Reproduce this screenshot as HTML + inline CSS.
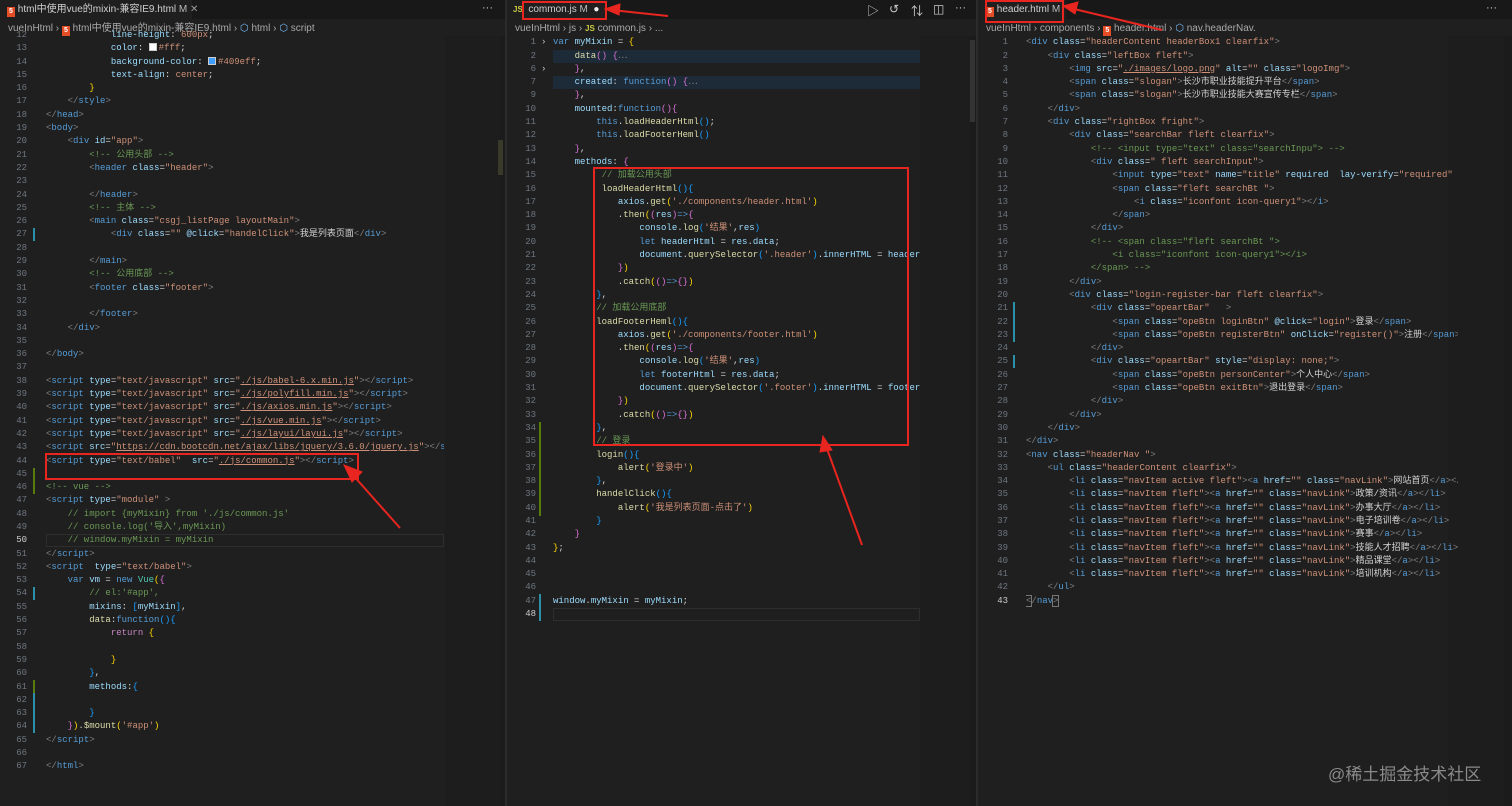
<!DOCTYPE html>
<html><head><meta charset="utf-8">
<style>
*{margin:0;padding:0;box-sizing:border-box}
body{width:1512px;height:806px;background:#1f1f1f;overflow:hidden;position:relative;font-family:"Liberation Sans","Noto Sans CJK SC",sans-serif}
.pane{position:absolute;top:0;height:806px;background:#1f1f1f;overflow:hidden}
.tabbar{position:absolute;left:0;top:0;right:0;height:19px;background:#181818}
.tab{position:absolute;top:0;height:19px;background:#1f1f1f;color:#d0d0d0;font-size:10px;line-height:19px;white-space:nowrap}
.crumb{position:absolute;top:22px;left:8px;font-size:10px;color:#a9a9a9;white-space:nowrap;line-height:14px}
pre{position:absolute;font-family:"Liberation Mono","Noto Sans CJK SC",monospace;font-size:9px;line-height:13.3px;color:#d4d4d4;white-space:pre}
.ln{text-align:right;color:#6e7681}
.t{color:#569cd6}.p{color:#808080}.a{color:#9cdcfe}.s{color:#ce9178}.c{color:#6a9955}.k{color:#569cd6}.f{color:#dcdcaa}.y{color:#ffd700}.m{color:#da70d6}.b{color:#179fff}.v{color:#9cdcfe}.r{color:#c586c0}.g{color:#4ec9b0}
.sw{display:inline-block;width:8px;height:8px;border:1px solid #ccc;vertical-align:-1px;margin-right:2px}
.mini{position:absolute;background:#252525}
.mark{position:absolute;width:2px}
.red{position:absolute;border:2px solid #e8251f}
.h5{display:inline-block;width:8px;height:10px;background:#e44d26;color:#fff;font-size:7px;line-height:10px;text-align:center;font-weight:bold;vertical-align:-1px}
.ic{position:absolute;top:2px;color:#ccc;font-size:12px}
</style></head><body>

<!-- LEFT PANE -->
<div class="pane" style="left:0;width:505px">
 <div class="tabbar"></div>
 <div class="tab" style="left:0;width:192px;padding-left:7px"><span class="h5">5</span> html中使用vue的mixin-兼容IE9.html <span style="color:#bbb">M</span> <span style="color:#999">✕</span></div>
 <div style="position:absolute;left:482px;top:2px;color:#ccc;font-size:11px">···</div>
 <div class="crumb">vueInHtml › <span class="h5">5</span> html中使用vue的mixin-兼容IE9.html › <span style="color:#75beff">⬡</span> html › <span style="color:#75beff">⬡</span> script</div>
 <div class="mini" style="left:445px;top:36px;width:55px;height:770px;background:#1d1d1d"></div>
 <div class="mini" style="left:500px;top:36px;width:5px;height:770px;background:#1b1b1b"></div>
 <div style="position:absolute;left:498px;top:140px;width:5px;height:35px;background:#3a3a2a"></div>
 <div style="position:absolute;left:46px;top:534px;width:398px;height:13px;border:1px solid #2e2e2e"></div>
 <div class="mark" style="left:33px;top:228px;height:13px;background:#2b8fa8"></div>
 <div class="mark" style="left:33px;top:468px;height:26px;background:#587c0c"></div>
 <div class="mark" style="left:33px;top:587px;height:13px;background:#2b8fa8"></div>
 <div class="mark" style="left:33px;top:680px;height:13px;background:#587c0c"></div>
 <div class="mark" style="left:33px;top:693px;height:40px;background:#2b8fa8"></div>
 <pre class="ln" style="left:0;width:27px;top:29px">12
13
14
15
16
17
18
19
20
21
22
23
24
25
26
27
28
29
30
31
32
33
34
35
36
37
38
39
40
41
42
43
44
45
46
47
48
49
<span style="color:#ccc">50</span>
51
52
53
54
55
56
57
58
59
60
61
62
63
64
65
66
67</pre>
 <pre style="left:46px;top:29px;width:398px;overflow:hidden">            <span class="a">line-height</span>: <span class="s">600px</span>;
            <span class="a">color</span>: <span class="sw" style="background:#fff"></span><span class="s">#fff</span>;
            <span class="a">background-color</span>: <span class="sw" style="background:#409eff"></span><span class="s">#409eff</span>;
            <span class="a">text-align</span>: <span class="s">center</span>;
        <span class="y">}</span>
    <span class="p">&lt;/</span><span class="t">style</span><span class="p">&gt;</span>
<span class="p">&lt;/</span><span class="t">head</span><span class="p">&gt;</span>
<span class="p">&lt;</span><span class="t">body</span><span class="p">&gt;</span>
    <span class="p">&lt;</span><span class="t">div</span> <span class="a">id</span>=<span class="s">"app"</span><span class="p">&gt;</span>
        <span class="c">&lt;!-- 公用头部 --&gt;</span>
        <span class="p">&lt;</span><span class="t">header</span> <span class="a">class</span>=<span class="s">"header"</span><span class="p">&gt;</span>

        <span class="p">&lt;/</span><span class="t">header</span><span class="p">&gt;</span>
        <span class="c">&lt;!-- 主体 --&gt;</span>
        <span class="p">&lt;</span><span class="t">main</span> <span class="a">class</span>=<span class="s">"csgj_listPage layoutMain"</span><span class="p">&gt;</span>
            <span class="p">&lt;</span><span class="t">div</span> <span class="a">class</span>=<span class="s">""</span> <span class="a">@click</span>=<span class="s">"handelClick"</span><span class="p">&gt;</span>我是列表页面<span class="p">&lt;/</span><span class="t">div</span><span class="p">&gt;</span>

        <span class="p">&lt;/</span><span class="t">main</span><span class="p">&gt;</span>
        <span class="c">&lt;!-- 公用底部 --&gt;</span>
        <span class="p">&lt;</span><span class="t">footer</span> <span class="a">class</span>=<span class="s">"footer"</span><span class="p">&gt;</span>

        <span class="p">&lt;/</span><span class="t">footer</span><span class="p">&gt;</span>
    <span class="p">&lt;/</span><span class="t">div</span><span class="p">&gt;</span>

<span class="p">&lt;/</span><span class="t">body</span><span class="p">&gt;</span>

<span class="p">&lt;</span><span class="t">script</span> <span class="a">type</span>=<span class="s">"text/javascript"</span> <span class="a">src</span>=<span class="s">"<u>./js/babel-6.x.min.js</u>"</span><span class="p">&gt;&lt;/</span><span class="t">script</span><span class="p">&gt;</span>
<span class="p">&lt;</span><span class="t">script</span> <span class="a">type</span>=<span class="s">"text/javascript"</span> <span class="a">src</span>=<span class="s">"<u>./js/polyfill.min.js</u>"</span><span class="p">&gt;&lt;/</span><span class="t">script</span><span class="p">&gt;</span>
<span class="p">&lt;</span><span class="t">script</span> <span class="a">type</span>=<span class="s">"text/javascript"</span> <span class="a">src</span>=<span class="s">"<u>./js/axios.min.js</u>"</span><span class="p">&gt;&lt;/</span><span class="t">script</span><span class="p">&gt;</span>
<span class="p">&lt;</span><span class="t">script</span> <span class="a">type</span>=<span class="s">"text/javascript"</span> <span class="a">src</span>=<span class="s">"<u>./js/vue.min.js</u>"</span><span class="p">&gt;&lt;/</span><span class="t">script</span><span class="p">&gt;</span>
<span class="p">&lt;</span><span class="t">script</span> <span class="a">type</span>=<span class="s">"text/javascript"</span> <span class="a">src</span>=<span class="s">"<u>./js/layui/layui.js</u>"</span><span class="p">&gt;&lt;/</span><span class="t">script</span><span class="p">&gt;</span>
<span class="p">&lt;</span><span class="t">script</span> <span class="a">src</span>=<span class="s">"<u>https://cdn.bootcdn.net/ajax/libs/jquery/3.6.0/jquery.js</u>"</span><span class="p">&gt;&lt;/</span><span class="t">script</span><span class="p">&gt;</span>
<span class="p">&lt;</span><span class="t">script</span> <span class="a">type</span>=<span class="s">"text/babel"</span>  <span class="a">src</span>=<span class="s">"<u>./js/common.js</u>"</span><span class="p">&gt;&lt;/</span><span class="t">script</span><span class="p">&gt;</span>

<span class="c">&lt;!-- vue --&gt;</span>
<span class="p">&lt;</span><span class="t">script</span> <span class="a">type</span>=<span class="s">"module"</span> <span class="p">&gt;</span>
    <span class="c">// import {myMixin} from './js/common.js'</span>
    <span class="c">// console.log('导入',myMixin)</span>
    <span class="c">// window.myMixin = myMixin</span>
<span class="p">&lt;/</span><span class="t">script</span><span class="p">&gt;</span>
<span class="p">&lt;</span><span class="t">script</span>  <span class="a">type</span>=<span class="s">"text/babel"</span><span class="p">&gt;</span>
    <span class="k">var</span> <span class="v">vm</span> = <span class="k">new</span> <span class="g">Vue</span><span class="y">(</span><span class="m">{</span>
        <span class="c">// el:'#app',</span>
        <span class="v">mixins</span>: <span class="b">[</span><span class="v">myMixin</span><span class="b">]</span>,
        <span class="f">data</span>:<span class="k">function</span><span class="b">(){</span>
            <span class="r">return</span> <span class="y">{</span>

            <span class="y">}</span>
        <span class="b">}</span>,
        <span class="v">methods</span>:<span class="b">{</span>

        <span class="b">}</span>
    <span class="m">}</span><span class="y">)</span>.<span class="f">$mount</span><span class="y">(</span><span class="s">'#app'</span><span class="y">)</span>
<span class="p">&lt;/</span><span class="t">script</span><span class="p">&gt;</span>

<span class="p">&lt;/</span><span class="t">html</span><span class="p">&gt;</span></pre>
</div>
<div style="position:absolute;left:505px;top:0;width:2px;height:806px;background:#2b2b2b"></div>

<!-- MIDDLE PANE -->
<div class="pane" style="left:507px;width:469px">
 <div class="tabbar"></div>
 <div class="tab" style="left:0;width:100px;padding-left:6px"><span style="color:#cbcb41;font-size:8px;font-weight:bold">JS</span> &nbsp;common.js <span style="color:#bbb">M</span> &nbsp;<span style="color:#eee">●</span></div>
 <div class="ic" style="left:360px">▷</div>
 <div class="ic" style="left:382px">↺</div>
 <div class="ic" style="left:404px">⇅</div>
 <div class="ic" style="left:426px">◫</div>
 <div class="ic" style="left:448px;font-size:11px">···</div>
 <div class="crumb">vueInHtml › js › <span style="color:#cbcb41;font-size:8px;font-weight:bold">JS</span> common.js › ...</div>
 <div class="mini" style="left:413px;top:36px;width:50px;height:770px;background:#1d1d1d"></div>
 <div style="position:absolute;left:463px;top:36px;width:6px;height:770px;background:#1b1b1b"></div>
 <div style="position:absolute;left:463px;top:40px;width:5px;height:82px;background:#333"></div>
 <div style="position:absolute;left:46px;top:49.6px;width:367px;height:13.3px;background:#1d2b38"></div>
 <div style="position:absolute;left:46px;top:76.2px;width:367px;height:13.3px;background:#1d2b38"></div>
 <div style="position:absolute;left:46px;top:608px;width:367px;height:13px;border:1px solid #2e2e2e"></div>
 <div class="mark" style="left:32px;top:422px;height:94px;background:#587c0c"></div>
 <div class="mark" style="left:32px;top:594px;height:27px;background:#2b8fa8"></div>
 <pre class="ln" style="left:0;width:29px;top:36.3px">1
2
6
7
9
10
11
12
13
14
15
16
17
18
19
20
21
22
23
24
25
26
27
28
29
30
31
32
33
34
35
36
37
38
39
40
41
42
43
44
45
46
47
<span style="color:#ccc">48</span></pre>
 <pre style="left:34px;top:36.3px;color:#c5c5c5">
›

›</pre>
 <pre style="left:46px;top:36.3px;width:367px;overflow:hidden"><span class="k">var</span> <span class="v">myMixin</span> = <span class="y">{</span>
    <span class="f">data</span><span class="m">()</span> <span class="m">{</span><span class="p">⋯</span>
    <span class="m">}</span>,
    <span class="v">created</span>: <span class="k">function</span><span class="m">()</span> <span class="m">{</span><span class="p">⋯</span>
    <span class="m">}</span>,
    <span class="v">mounted</span>:<span class="k">function</span><span class="m">(){</span>
        <span class="k">this</span>.<span class="f">loadHeaderHtml</span><span class="b">()</span>;
        <span class="k">this</span>.<span class="f">loadFooterHeml</span><span class="b">()</span>
    <span class="m">}</span>,
    <span class="v">methods</span>: <span class="m">{</span>
         <span class="c">// 加载公用头部</span>
         <span class="f">loadHeaderHtml</span><span class="b">(){</span>
            <span class="v">axios</span>.<span class="f">get</span><span class="y">(</span><span class="s">'./components/header.html'</span><span class="y">)</span>
            .<span class="f">then</span><span class="y">(</span><span class="m">(</span><span class="v">res</span><span class="m">)</span><span class="k">=&gt;</span><span class="m">{</span>
                <span class="v">console</span>.<span class="f">log</span><span class="b">(</span><span class="s">'结果'</span>,<span class="v">res</span><span class="b">)</span>
                <span class="k">let</span> <span class="v">headerHtml</span> = <span class="v">res</span>.<span class="v">data</span>;
                <span class="v">document</span>.<span class="f">querySelector</span><span class="b">(</span><span class="s">'.header'</span><span class="b">)</span>.<span class="v">innerHTML</span> = <span class="v">headerHtml</span>
            <span class="m">}</span><span class="y">)</span>
            .<span class="f">catch</span><span class="y">(</span><span class="m">()</span><span class="k">=&gt;</span><span class="m">{}</span><span class="y">)</span>
        <span class="b">}</span>,
        <span class="c">// 加载公用底部</span>
        <span class="f">loadFooterHeml</span><span class="b">(){</span>
            <span class="v">axios</span>.<span class="f">get</span><span class="y">(</span><span class="s">'./components/footer.html'</span><span class="y">)</span>
            .<span class="f">then</span><span class="y">(</span><span class="m">(</span><span class="v">res</span><span class="m">)</span><span class="k">=&gt;</span><span class="m">{</span>
                <span class="v">console</span>.<span class="f">log</span><span class="b">(</span><span class="s">'结果'</span>,<span class="v">res</span><span class="b">)</span>
                <span class="k">let</span> <span class="v">footerHtml</span> = <span class="v">res</span>.<span class="v">data</span>;
                <span class="v">document</span>.<span class="f">querySelector</span><span class="b">(</span><span class="s">'.footer'</span><span class="b">)</span>.<span class="v">innerHTML</span> = <span class="v">footerHtml</span>
            <span class="m">}</span><span class="y">)</span>
            .<span class="f">catch</span><span class="y">(</span><span class="m">()</span><span class="k">=&gt;</span><span class="m">{}</span><span class="y">)</span>
        <span class="b">}</span>,
        <span class="c">// 登录</span>
        <span class="f">login</span><span class="b">(){</span>
            <span class="f">alert</span><span class="y">(</span><span class="s">'登录中'</span><span class="y">)</span>
        <span class="b">}</span>,
        <span class="f">handelClick</span><span class="b">(){</span>
            <span class="f">alert</span><span class="y">(</span><span class="s">'我是列表页面-点击了'</span><span class="y">)</span>
        <span class="b">}</span>
    <span class="m">}</span>
<span class="y">}</span>;



<span class="v">window</span>.<span class="v">myMixin</span> = <span class="v">myMixin</span>;
</pre>
</div>
<div style="position:absolute;left:976px;top:0;width:2px;height:806px;background:#2b2b2b"></div>

<!-- RIGHT PANE -->
<div class="pane" style="left:978px;width:534px">
 <div class="tabbar"></div>
 <div class="tab" style="left:0;width:88px;padding-left:8px"><span class="h5">5</span> header.html <span style="color:#bbb">M</span></div>
 <div style="position:absolute;left:508px;top:2px;color:#ccc;font-size:11px">···</div>
 <div class="crumb">vueInHtml › components › <span class="h5">5</span> header.html › <span style="color:#75beff">⬡</span> nav.headerNav.</div>
 <div class="mini" style="left:470px;top:36px;width:56px;height:770px;background:#1d1d1d"></div>
 <div style="position:absolute;left:526px;top:36px;width:8px;height:770px;background:#1b1b1b"></div>
 <div class="mark" style="left:35px;top:302px;height:40px;background:#2b8fa8"></div>
 <div class="mark" style="left:35px;top:355px;height:13px;background:#2b8fa8"></div>
 <pre class="ln" style="left:0;width:30px;top:36.3px">1
2
3
4
5
6
7
8
9
10
11
12
13
14
15
16
17
18
19
20
21
22
23
24
25
26
27
28
29
30
31
32
33
34
35
36
37
38
39
40
41
42
<span style="color:#ccc">43</span></pre>
 <pre style="left:48px;top:36.3px;width:432px;overflow:hidden"><span class="p">&lt;</span><span class="t">div</span> <span class="a">class</span>=<span class="s">"headerContent headerBox1 clearfix"</span><span class="p">&gt;</span>
    <span class="p">&lt;</span><span class="t">div</span> <span class="a">class</span>=<span class="s">"leftBox fleft"</span><span class="p">&gt;</span>
        <span class="p">&lt;</span><span class="t">img</span> <span class="a">src</span>=<span class="s">"<u>./images/logo.png</u>"</span> <span class="a">alt</span>=<span class="s">""</span> <span class="a">class</span>=<span class="s">"logoImg"</span><span class="p">&gt;</span>
        <span class="p">&lt;</span><span class="t">span</span> <span class="a">class</span>=<span class="s">"slogan"</span><span class="p">&gt;</span>长沙市职业技能提升平台<span class="p">&lt;/</span><span class="t">span</span><span class="p">&gt;</span>
        <span class="p">&lt;</span><span class="t">span</span> <span class="a">class</span>=<span class="s">"slogan"</span><span class="p">&gt;</span>长沙市职业技能大赛宣传专栏<span class="p">&lt;/</span><span class="t">span</span><span class="p">&gt;</span>
    <span class="p">&lt;/</span><span class="t">div</span><span class="p">&gt;</span>
    <span class="p">&lt;</span><span class="t">div</span> <span class="a">class</span>=<span class="s">"rightBox fright"</span><span class="p">&gt;</span>
        <span class="p">&lt;</span><span class="t">div</span> <span class="a">class</span>=<span class="s">"searchBar fleft clearfix"</span><span class="p">&gt;</span>
            <span class="c">&lt;!-- &lt;input type="text" class="searchInpu"&gt; --&gt;</span>
            <span class="p">&lt;</span><span class="t">div</span> <span class="a">class</span>=<span class="s">" fleft searchInput"</span><span class="p">&gt;</span>
                <span class="p">&lt;</span><span class="t">input</span> <span class="a">type</span>=<span class="s">"text"</span> <span class="a">name</span>=<span class="s">"title"</span> <span class="a">required</span>  <span class="a">lay-verify</span>=<span class="s">"required"</span> <span class="a">placeholder</span>
                <span class="p">&lt;</span><span class="t">span</span> <span class="a">class</span>=<span class="s">"fleft searchBt "</span><span class="p">&gt;</span>
                    <span class="p">&lt;</span><span class="t">i</span> <span class="a">class</span>=<span class="s">"iconfont icon-query1"</span><span class="p">&gt;&lt;/</span><span class="t">i</span><span class="p">&gt;</span>
                <span class="p">&lt;/</span><span class="t">span</span><span class="p">&gt;</span>
            <span class="p">&lt;/</span><span class="t">div</span><span class="p">&gt;</span>
            <span class="c">&lt;!-- &lt;span class="fleft searchBt "&gt;</span>
<span class="c">                &lt;i class="iconfont icon-query1"&gt;&lt;/i&gt;</span>
<span class="c">            &lt;/span&gt; --&gt;</span>
        <span class="p">&lt;/</span><span class="t">div</span><span class="p">&gt;</span>
        <span class="p">&lt;</span><span class="t">div</span> <span class="a">class</span>=<span class="s">"login-register-bar fleft clearfix"</span><span class="p">&gt;</span>
            <span class="p">&lt;</span><span class="t">div</span> <span class="a">class</span>=<span class="s">"opeartBar"</span>   <span class="p">&gt;</span>
                <span class="p">&lt;</span><span class="t">span</span> <span class="a">class</span>=<span class="s">"opeBtn loginBtn"</span> <span class="a">@click</span>=<span class="s">"login"</span><span class="p">&gt;</span>登录<span class="p">&lt;/</span><span class="t">span</span><span class="p">&gt;</span>
                <span class="p">&lt;</span><span class="t">span</span> <span class="a">class</span>=<span class="s">"opeBtn registerBtn"</span> <span class="a">onClick</span>=<span class="s">"register()"</span><span class="p">&gt;</span>注册<span class="p">&lt;/</span><span class="t">span</span><span class="p">&gt;</span>
            <span class="p">&lt;/</span><span class="t">div</span><span class="p">&gt;</span>
            <span class="p">&lt;</span><span class="t">div</span> <span class="a">class</span>=<span class="s">"opeartBar"</span> <span class="a">style</span>=<span class="s">"display: none;"</span><span class="p">&gt;</span>
                <span class="p">&lt;</span><span class="t">span</span> <span class="a">class</span>=<span class="s">"opeBtn personCenter"</span><span class="p">&gt;</span>个人中心<span class="p">&lt;/</span><span class="t">span</span><span class="p">&gt;</span>
                <span class="p">&lt;</span><span class="t">span</span> <span class="a">class</span>=<span class="s">"opeBtn exitBtn"</span><span class="p">&gt;</span>退出登录<span class="p">&lt;/</span><span class="t">span</span><span class="p">&gt;</span>
            <span class="p">&lt;/</span><span class="t">div</span><span class="p">&gt;</span>
        <span class="p">&lt;/</span><span class="t">div</span><span class="p">&gt;</span>
    <span class="p">&lt;/</span><span class="t">div</span><span class="p">&gt;</span>
<span class="p">&lt;/</span><span class="t">div</span><span class="p">&gt;</span>
<span class="p">&lt;</span><span class="t">nav</span> <span class="a">class</span>=<span class="s">"headerNav "</span><span class="p">&gt;</span>
    <span class="p">&lt;</span><span class="t">ul</span> <span class="a">class</span>=<span class="s">"headerContent clearfix"</span><span class="p">&gt;</span>
        <span class="p">&lt;</span><span class="t">li</span> <span class="a">class</span>=<span class="s">"navItem active fleft"</span><span class="p">&gt;&lt;</span><span class="t">a</span> <span class="a">href</span>=<span class="s">""</span> <span class="a">class</span>=<span class="s">"navLink"</span><span class="p">&gt;</span>网站首页<span class="p">&lt;/</span><span class="t">a</span><span class="p">&gt;&lt;/</span><span class="t">li</span><span class="p">&gt;</span>
        <span class="p">&lt;</span><span class="t">li</span> <span class="a">class</span>=<span class="s">"navItem fleft"</span><span class="p">&gt;&lt;</span><span class="t">a</span> <span class="a">href</span>=<span class="s">""</span> <span class="a">class</span>=<span class="s">"navLink"</span><span class="p">&gt;</span>政策/资讯<span class="p">&lt;/</span><span class="t">a</span><span class="p">&gt;&lt;/</span><span class="t">li</span><span class="p">&gt;</span>
        <span class="p">&lt;</span><span class="t">li</span> <span class="a">class</span>=<span class="s">"navItem fleft"</span><span class="p">&gt;&lt;</span><span class="t">a</span> <span class="a">href</span>=<span class="s">""</span> <span class="a">class</span>=<span class="s">"navLink"</span><span class="p">&gt;</span>办事大厅<span class="p">&lt;/</span><span class="t">a</span><span class="p">&gt;&lt;/</span><span class="t">li</span><span class="p">&gt;</span>
        <span class="p">&lt;</span><span class="t">li</span> <span class="a">class</span>=<span class="s">"navItem fleft"</span><span class="p">&gt;&lt;</span><span class="t">a</span> <span class="a">href</span>=<span class="s">""</span> <span class="a">class</span>=<span class="s">"navLink"</span><span class="p">&gt;</span>电子培训卷<span class="p">&lt;/</span><span class="t">a</span><span class="p">&gt;&lt;/</span><span class="t">li</span><span class="p">&gt;</span>
        <span class="p">&lt;</span><span class="t">li</span> <span class="a">class</span>=<span class="s">"navItem fleft"</span><span class="p">&gt;&lt;</span><span class="t">a</span> <span class="a">href</span>=<span class="s">""</span> <span class="a">class</span>=<span class="s">"navLink"</span><span class="p">&gt;</span>赛事<span class="p">&lt;/</span><span class="t">a</span><span class="p">&gt;&lt;/</span><span class="t">li</span><span class="p">&gt;</span>
        <span class="p">&lt;</span><span class="t">li</span> <span class="a">class</span>=<span class="s">"navItem fleft"</span><span class="p">&gt;&lt;</span><span class="t">a</span> <span class="a">href</span>=<span class="s">""</span> <span class="a">class</span>=<span class="s">"navLink"</span><span class="p">&gt;</span>技能人才招聘<span class="p">&lt;/</span><span class="t">a</span><span class="p">&gt;&lt;/</span><span class="t">li</span><span class="p">&gt;</span>
        <span class="p">&lt;</span><span class="t">li</span> <span class="a">class</span>=<span class="s">"navItem fleft"</span><span class="p">&gt;&lt;</span><span class="t">a</span> <span class="a">href</span>=<span class="s">""</span> <span class="a">class</span>=<span class="s">"navLink"</span><span class="p">&gt;</span>精品课堂<span class="p">&lt;/</span><span class="t">a</span><span class="p">&gt;&lt;/</span><span class="t">li</span><span class="p">&gt;</span>
        <span class="p">&lt;</span><span class="t">li</span> <span class="a">class</span>=<span class="s">"navItem fleft"</span><span class="p">&gt;&lt;</span><span class="t">a</span> <span class="a">href</span>=<span class="s">""</span> <span class="a">class</span>=<span class="s">"navLink"</span><span class="p">&gt;</span>培训机构<span class="p">&lt;/</span><span class="t">a</span><span class="p">&gt;&lt;/</span><span class="t">li</span><span class="p">&gt;</span>
    <span class="p">&lt;/</span><span class="t">ul</span><span class="p">&gt;</span>
<span class="p" style="outline:1px solid #777">&lt;</span><span class="p">/</span><span class="t">nav</span><span class="p" style="outline:1px solid #777">&gt;</span></pre>
 <div style="position:absolute;left:350px;top:760px;color:#8a8a8a;font-size:17px;white-space:nowrap">@稀土掘金技术社区</div>
</div>

<!-- annotations -->
<div class="red" style="left:45px;top:453px;width:314px;height:27px"></div>
<div class="red" style="left:593px;top:167px;width:316px;height:279px"></div>
<div class="red" style="left:522px;top:1px;width:85px;height:19px"></div>
<div class="red" style="left:985px;top:0;width:79px;height:23px"></div>
<svg style="position:absolute;left:0;top:0" width="1512" height="806">
 <g fill="#e8251f" stroke="#e8251f">
  <line x1="400" y1="528" x2="352" y2="474" stroke-width="2"/>
  <polygon points="344,465 362,472 352,482"/>
  <line x1="862" y1="545" x2="826" y2="446" stroke-width="2"/>
  <polygon points="823,436 832,450 820,452"/>
  <line x1="668" y1="16" x2="612" y2="10" stroke-width="2"/>
  <polygon points="605,9 620,4 619,15"/>
  <line x1="1162" y1="30" x2="1070" y2="8" stroke-width="2"/>
  <polygon points="1063,6 1078,2 1075,14"/>
 </g>
</svg>
</body></html>
